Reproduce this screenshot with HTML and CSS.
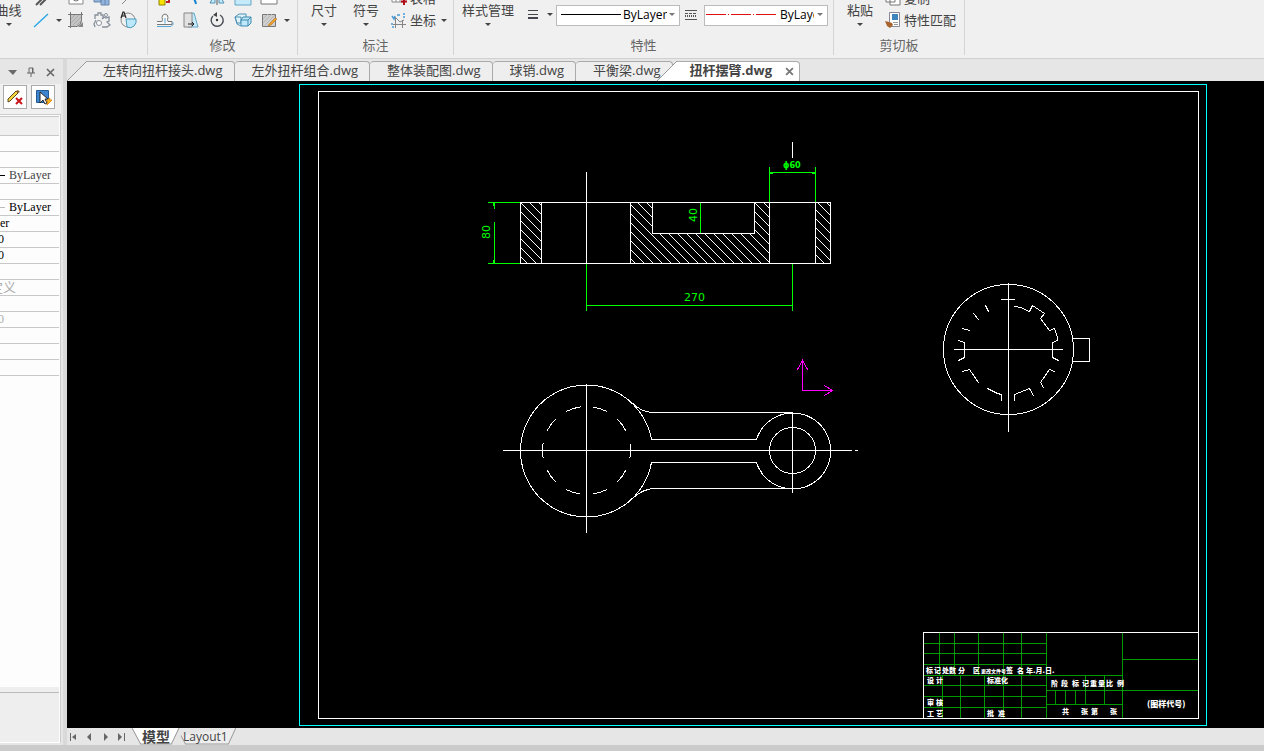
FILE: index.html
```html
<!DOCTYPE html>
<html lang="zh-CN">
<head>
<meta charset="utf-8">
<title>扭杆摆臂.dwg</title>
<link rel="stylesheet" href="styles.css">
</head>
<body>
<header class="ribbon">
  <section class="group group-draw">
    <div class="tools">
      <button class="big">曲线<i class="caret"></i></button>
      <div class="rows">
        <div class="row">
          <button class="tool" aria-label="双线"><svg viewBox="0 0 18 18"><path d="M4 16L15 5M8 16L17 7" stroke="#555" stroke-width="2"/></svg></button>
          <i class="gap"></i>
          <button class="tool" aria-label="云线"><svg viewBox="0 0 18 18"><path d="M2 2h14v13H2z" fill="#fff" stroke="#888"/><circle cx="9" cy="9" r="3" fill="none" stroke="#777"/></svg></button>
          <button class="tool" aria-label="块"><svg viewBox="0 0 18 18"><path d="M1 5h7v8H1zM8 7h8v9H8z" fill="#8fb4dd" stroke="#6b86ab"/><path d="M12 7v9" stroke="#6b86ab"/></svg></button>
          <button class="tool" aria-label="点"><svg viewBox="0 0 18 18"><path d="M3 15L12 6" stroke="#888"/></svg></button>
        </div>
        <div class="row">
          <button class="tool" aria-label="直线"><svg viewBox="0 0 18 18"><path d="M2 16L16 3" stroke="#22a5e8" stroke-width="1.3"/></svg></button>
          <i class="gap"><i class="caret"></i></i>
          <button class="tool" aria-label="填充"><svg viewBox="0 0 18 18"><path d="M4 4h11v7l-4 4H4z" fill="#c4c4c4"/><path d="M4 8l4-4M4 12l8-8M6 14l9-9M10 14l5-5" stroke="#aaa"/><path d="M1 3.500h15M3.500 1v16M1 15.500h9q4-1 4.500-6V1" fill="none" stroke="#777"/><path d="M11 16h5v-5" fill="#888"/></svg></button>
          <button class="tool" aria-label="齿轮"><svg viewBox="0 0 18 18"><path d="M2 8V4h3V2h3v2h2v4M9 8l2-2 2 1 3-1v4l-2 1 3 3-3 2H9M2 16l-1-3 2-4" fill="none" stroke="#87909c" stroke-width="1.3"/><circle cx="6" cy="12" r="2.5" fill="#fff" stroke="#87909c"/><circle cx="13" cy="4" r="1.5" fill="#fff" stroke="#87909c"/></svg></button>
          <button class="tool" aria-label="局部放大"><svg viewBox="0 0 18 18"><circle cx="9" cy="9" r="7" fill="none" stroke="#888"/><path d="M7 8h10q1 4-2 7-3 3-7 1z" fill="#bce8fb" stroke="#4d9abb"/><path d="M2 7l2-6h1l2 6M3 5h3" fill="none" stroke="#222" stroke-width="1.2"/></svg></button>
        </div>
      </div>
    </div>
  </section>
  <section class="group group-edit">
    <div class="tools">
      <div class="rows">
        <div class="row">
          <button class="tool" aria-label="删除"><svg viewBox="0 0 18 18"><path d="M3 8h6v8H3z" fill="#fae200" stroke="#8d8400"/><path d="M10 13h3V8" fill="none" stroke="#b22" stroke-width="2"/></svg></button>
          <button class="tool" aria-label="修剪"><svg viewBox="0 0 18 18"><path d="M9 6q4 4 5 9" stroke="#1684cf" stroke-width="2"/></svg></button>
          <button class="tool" aria-label="镜像"><svg viewBox="0 0 18 18"><path d="M2 14l5-9v9zM16 14l-5-9v9z" fill="#c5ebfb" stroke="#4f91b7"/><path d="M9 3v13" stroke="#555"/></svg></button>
          <button class="tool" aria-label="拉伸"><svg viewBox="0 0 18 18"><path d="M1 2h16v14H1z" fill="#c5ebfb" stroke="#65a5c5"/></svg></button>
          <button class="tool" aria-label="阵列"><svg viewBox="0 0 18 18"><path d="M1 2h16v13H1z" fill="#fff" stroke="#777"/></svg></button>
        </div>
        <div class="row">
          <button class="tool" aria-label="偏移"><svg viewBox="0 0 18 18"><path d="M1 10.500h5q1-2 0-4 0-3 3-3.500 3 .5 3 3.500-1 2 0 4h4v3H1" fill="#f8f8f8" stroke="#777"/><path d="M1 15.500h14l2-2v-2M9 12.500V7" fill="none" stroke="#55a5d5"/></svg></button>
          <button class="tool" aria-label="倾斜"><svg viewBox="0 0 18 18"><path d="M9 2h3l4 14H6z" fill="#c5ebfb" stroke="#65a5c5"/><path d="M2 2h8v14H2z" fill="#e1e1e1" stroke="#888"/><path d="M6 13h6l-2-2m2 2l-2 2" fill="none" stroke="#222"/></svg></button>
          <button class="tool" aria-label="旋转"><svg viewBox="0 0 18 18"><path d="M12 4a6 6 0 1 1-7 1" fill="none" stroke="#4b4f57" stroke-width="1.4"/><path d="M9 1v5L5 4z" fill="#444"/><circle cx="9" cy="9" r="1.2" fill="#333"/></svg></button>
          <button class="tool" aria-label="缩放"><svg viewBox="0 0 18 18"><path d="M1 6l4-3h7v3M1 6h6v6H3zM1 6l2 7 4 2" fill="#def3fc" stroke="#4c91b3"/><path d="M7 9l2-3h8v6l-3 3H7zM7 9h7v6M14 9l3-3" fill="#bfe8fb" stroke="#3e89b0"/></svg></button>
          <button class="tool" aria-label="编辑填充"><svg viewBox="0 0 18 18"><path d="M2.500 3.500h13v12h-13z" fill="#d0d0d0" stroke="#777"/><path d="M3 8l5-5M3 12l9-9M5 14L15 4M9 14l6-6" stroke="#b4b4b4"/><path d="M9 13l6-6 2 1-6 6-3 1z" fill="#f2a12c" stroke="#b0762a" stroke-width=".6"/></svg></button>
          <i class="gap"><i class="caret"></i></i>
        </div>
      </div>
    </div>
    <h2>修改</h2>
  </section>
  <section class="group group-note">
    <div class="tools">
      <button class="big">尺寸<i class="caret"></i></button>
      <button class="big">符号<i class="caret"></i></button>
      <div class="rows">
        <button class="row text-tool"><svg viewBox="0 0 18 18"><path d="M2 3h12v10H2zM2 6h12M2 10h12M6 3v10M10 3v10" fill="#fff" stroke="#888"/><path d="M14 9v7M11 12.500h6" stroke="#b10d16" stroke-width="2"/></svg>表格</button>
        <button class="row text-tool"><svg viewBox="0 0 18 18"><path d="M5.500 6v11M3 13.500h13M12.500 9v8M6 7l4 4 4-2" fill="none" stroke="#858585"/><path d="M2 5l2 3 1-3M7 4h3M13 3h2M13 6h2M2 12v2M2 16h2" fill="none" stroke="#4b9bd8" stroke-width="1.5"/></svg>坐标<i class="caret"></i></button>
      </div>
    </div>
    <h2>标注</h2>
  </section>
  <section class="group group-props">
    <div class="tools">
      <button class="big">样式管理<i class="caret"></i></button>
      <button class="width-tool" aria-label="线宽"><svg viewBox="0 0 12 12"><path d="M1 2.500h10M1 6.500h10" stroke="#454550"/><path d="M1 10h10" stroke="#454550" stroke-width="2"/></svg><i class="caret"></i></button>
      <label class="picker"><select aria-label="线宽"><option>ByLayer</option></select><svg class="sample" viewBox="0 0 60 1"><path d="M0 .5h60" stroke="#000"/></svg><i class="caret"></i></label>
      <svg class="types" viewBox="0 0 12 12"><path d="M0 1.500h12M0 10.500h12" stroke="#555"/><path d="M0 4.500h12" stroke="#555" stroke-dasharray="3 1"/><path d="M0 7h12" stroke="#555" stroke-width="2" stroke-dasharray="1 1"/></svg>
      <label class="picker picker-type"><select aria-label="线型"><option>ByLayer</option></select><svg class="sample" viewBox="0 0 70 1"><path d="M0 .5h70" stroke="#e01010" stroke-dasharray="20 2 1 2"/></svg><i class="caret"></i></label>
    </div>
    <h2>特性</h2>
  </section>
  <section class="group group-clip">
    <div class="tools">
      <button class="big">粘贴<i class="caret"></i></button>
      <div class="rows">
        <button class="row text-tool"><svg viewBox="0 0 18 18"><path d="M2 2h9v11H2zM6 5h10v11H6z" fill="#fff" stroke="#777"/></svg>复制</button>
        <button class="row text-tool"><svg viewBox="0 0 18 18"><path d="M5.500 1.500h10v14h-10z" fill="#fff" stroke="#889"/><path d="M8 3h6v6H8z" fill="#3e84bd"/><path d="M9 11.500h5M10 13.500h4" stroke="#999"/><path d="M1 10l4 1 3 1 1 2-3 3-3-2z" fill="#a8632c"/></svg>特性匹配</button>
      </div>
    </div>
    <h2>剪切板</h2>
  </section>
</header>

<main class="main">
  <aside class="panel">
    <div class="panel-head">
      <button aria-label="菜单"><svg viewBox="0 0 10 10"><path d="M1 3h9L6 8z" fill="#6a6a6a"/></svg></button>
      <button aria-label="固定"><svg viewBox="0 0 10 10"><path d="M3 1h4v5M3 1v5M1 6h8M5 6v4" fill="none" stroke="#666"/><path d="M6 1h1v5H6z" fill="#666"/></svg></button>
      <button aria-label="关闭"><svg viewBox="0 0 10 10"><path d="M2 2l7 7M9 2L2 9" stroke="#666" stroke-width="1.6"/></svg></button>
    </div>
    <div class="panel-tools">
      <button aria-label="取消选择"><svg viewBox="0 0 20 20"><path d="M3 12L11 4l2 2-8 8-2 1z" fill="#f5d33c" stroke="#5b4a22"/><path d="M11 4l2-1 2 2-2 1z" fill="#8d5a2b"/><path d="M11 11l6 6M17 11l-6 6" stroke="#c8141c" stroke-width="2"/></svg></button>
      <button aria-label="快速选择"><svg viewBox="0 0 20 20"><path d="M3.500 3.500h12v12h-12z" fill="#3b86cf" stroke="#245a94"/><path d="M7 5v11l3-3 2 4 2-1-2-4h3z" fill="#fff" stroke="#222"/><path d="M17 11l-4 3h2l-1 4 5-5h-3z" fill="#ffc21f" stroke="#e08a10"/></svg></button>
    </div>
    <div class="props">
      <div class="prop prop-title"></div>
      <div class="prop"></div>
      <div class="prop"></div>
      <div class="prop dim"><i class="dash"></i>ByLayer</div>
      <div class="prop"></div>
      <div class="prop"><i class="dash light"></i>ByLayer</div>
      <div class="prop">er</div>
      <div class="prop num">0</div>
      <div class="prop num">0</div>
      <div class="prop"></div>
      <div class="prop off cut">定义</div>
      <div class="prop"></div>
      <div class="prop off num">0</div>
      <div class="prop"></div>
      <div class="prop"></div>
      <div class="prop"></div>
      <div class="props-foot"></div>
    </div>
  </aside>

  <section class="work">
    <nav class="tabs">
      <button class="tab tab-slant"><svg class="slant" viewBox="0 0 20 20"><path d="M0 20L20 0V20z" fill="#eee"/><path d="M0 20L20 0" stroke="#999"/></svg><span>左转向扭杆接头.dwg</span></button>
      <button class="tab"><span>左外扭杆组合.dwg</span></button>
      <button class="tab"><span>整体装配图.dwg</span></button>
      <button class="tab"><span>球销.dwg</span></button>
      <button class="tab tab-last"><span>平衡梁.dwg</span></button>
      <button class="tab tab-slant tab-active"><svg class="slant" viewBox="0 0 20 20"><path d="M0 20L20 0V20z" fill="#fff"/><path d="M0 20L20 0" stroke="#999"/></svg><span>扭杆摆臂.dwg<svg class="close" viewBox="0 0 8 8"><path d="M1 1l6 6M7 1L1 7" stroke="#777" stroke-width="1.6"/></svg></span></button>
    </nav>

    <svg class="canvas" viewBox="67 81 1197 647" role="img" aria-label="扭杆摆臂图纸">
      <defs>
        <clipPath id="cut-faces"><path d="M520 202h21v61h-21zM815 202h15v61h-15zM630 202h22v31h102v-31h15v61H630z"/></clipPath>
      </defs>
      <g transform="translate(.5 .5)" fill="none" stroke="#fff" stroke-linecap="square" shape-rendering="crispEdges">
        <path stroke="#0ff" d="M299 84H1206V725H299z"/>
        <path d="M318 91H1198V718H318z"/>

        <path clip-path="url(#cut-faces)" d="M466 202l61 61m-52-61l61 61m-52-61l61 61m-52-61l61 61m-52-61l61 61m-52-61l61 61m-52-61l61 61m-52-61l61 61m-52-61l61 61m-52-61l61 61m-52-61l61 61m-52-61l61 61m-52-61l61 61m-52-61l61 61m-52-61l61 61m-52-61l61 61m-52-61l61 61m-52-61l61 61m-52-61l61 61m-52-61l61 61m-52-61l61 61m-52-61l61 61m-52-61l61 61m-52-61l61 61m-52-61l61 61m-52-61l61 61m-52-61l61 61m-52-61l61 61m-52-61l61 61m-52-61l61 61m-52-61l61 61m-52-61l61 61m-52-61l61 61m-52-61l61 61m-52-61l61 61m-52-61l61 61m-52-61l61 61m-52-61l61 61m-52-61l61 61m-52-61l61 61m-52-61l61 61"/>
        <path d="M520 202H830V263H520zM541 202V263M630 202V263M652 202V233H754V202M769 202V263M815 202V263M586 172V263M792 142V157"/>
        <path stroke="#0f0" d="M488 202H519M488 263H519M494 202V208M494 222V263M493 203v2M493 260v2M700 203V232M586 264V310M792 264V310M586 305H792M769 167V201M815 167V201M769 172H815M770 173h2M812 173h2"/>

        <path d="M651 439A66 66 0 1 0 651 462M652 439H756M652 462H756M756 439A38 38 0 1 1 756 462M630 401Q641 412 652 412H792M633 497Q643 488 655 488H792"/>
        <circle cx="792" cy="450" r="23"/>
        <circle cx="586" cy="450" r="44" stroke-dasharray="14 13.65" stroke-dashoffset="7"/>
        <path d="M503 450H851M855 450H857M586 384V532M792 412V492"/>
        <path stroke="#f0f" d="M802 361V390H832M797 369L802 360L807 369M824 385L832 390L824 395"/>

        <circle cx="1008" cy="349" r="65"/>
        <path d="M1008 283V431M954 349H1062M1001 299H1014M1073 338H1089V361H1073"/>
        <path d="M1014 306L1020 307L1029 311L1032 305L1044 313L1040 318L1049 330L1054 328L1057 337V340L1052 342V357L1058 360M985 305L988 311M973 313L978 319M962 328L969 330M958 340L964 342V357L958 360M962 371L969 369L978 382M987 388L997 393L1001 394V400M1014 400V394L1029 388L1033 395M1043 387L1040 382L1049 369L1054 371"/>

        <path stroke="#090" d="M923 643H1046M923 653H1046M923 664H1046M923 675H1122M923 685H1046M923 696H1046M923 707H1046M939 632V675M954 632V675M978 632V675M942 675V718M960 675V718M984 675V718M1003 632V718M1021 632V718M1046 632V718M1122 632V718M1046 690H1198M1046 704H1122M1122 659H1198M1055 690V704M1065 690V704M1075 690V704M1085 675V704M1104 675V704"/>
        <path d="M1198 718H923V632H1198V718"/>
      </g>
      <g class="dims">
        <text x="684" y="301">270</text>
        <text transform="translate(490 239) rotate(-90)">80</text>
        <text transform="translate(697 222) rotate(-90)">40</text>
        <text class="narrow" x="783" y="168">ϕ60</text>
      </g>
      <g class="block-text">
        <text x="926" y="673">标</text><text x="934" y="673">记</text><text x="942" y="673">处</text><text x="949" y="673">数</text><text x="958" y="673">分</text><text x="973" y="673">区</text>
        <text class="tight" x="981" y="673">更改文件号</text><text x="1006" y="673">签</text><text x="1017" y="673">名</text><text x="1026" y="673">年.月.日.</text>
        <text x="927" y="683">设</text><text x="936" y="683">计</text><text x="987" y="683">标准化</text>
        <text x="927" y="705">审</text><text x="936" y="705">核</text>
        <text x="927" y="716">工</text><text x="936" y="716">艺</text><text x="987" y="716">批</text><text x="998" y="716">准</text>
        <text x="1051" y="686">阶</text><text x="1061" y="686">段</text><text x="1072" y="686">标</text><text x="1082" y="686">记</text><text x="1090" y="686">重</text><text x="1098" y="686">量</text><text x="1106" y="686">比</text><text x="1117" y="686">例</text>
        <text x="1062" y="714">共</text><text x="1081" y="714">张</text><text x="1091" y="714">第</text><text x="1110" y="714">张</text>
        <text class="code" x="1147" y="707">(图样代号)</text>
      </g>
    </svg>

    <nav class="sheets">
      <button class="step" aria-label="首页"><svg viewBox="0 0 10 8"><path d="M2.500 0v8" stroke="#666"/><path d="M8 1v6L4 4z" fill="#666"/></svg></button>
      <button class="step" aria-label="上一页"><svg viewBox="0 0 10 8"><path d="M7 0v8L3 4z" fill="#666"/></svg></button>
      <button class="step" aria-label="下一页"><svg viewBox="0 0 10 8"><path d="M4 0v8l4-4z" fill="#666"/></svg></button>
      <button class="step" aria-label="末页"><svg viewBox="0 0 10 8"><path d="M8.500 0v8" stroke="#666"/><path d="M2 0v8l4-4z" fill="#666"/></svg></button>
      <button class="sheet sheet-on"><svg viewBox="0 0 50 16" preserveAspectRatio="none"><path d="M0 0L9 15H41L49 0" fill="#fff" stroke="#999"/></svg><span>模型</span></button>
      <button class="sheet"><svg viewBox="0 0 62 16" preserveAspectRatio="none"><path d="M1 7L6 15H53L61 0" fill="#eee" stroke="#999"/></svg><span>Layout1</span></button>
    </nav>
  </section>
</main>
<footer class="status"></footer>
</body>
</html>
```
FILE: styles.css
```css
* { box-sizing: border-box; }
body {
  margin: 0;
  min-height: 100vh;
  display: flex;
  flex-direction: column;
  overflow: hidden;
  background: #e6e6e6;
  color: #444;
  font: 13px/20px "Open Sans", "Noto Sans CJK SC", sans-serif;
}
button {
  margin: 0;
  padding: 0;
  border: 0;
  background: none;
  color: inherit;
  font: inherit;
}
svg { display: block; fill: none; }

.caret {
  display: block;
  border: 3px solid transparent;
  border-top-color: #444;
  border-bottom: 0;
}

/* ribbon */
.ribbon {
  display: flex;
  height: 59px;
  overflow: hidden;
  background: #f0f0f0;
  border-bottom: 1px solid #d0d0d0;
}
.group {
  display: flex;
  flex-direction: column;
  justify-content: flex-end;
  border-right: 1px solid #d4d4d4;
  margin-bottom: 3px;
  flex: none;
}
.group h2 {
  flex: none;
  margin: 4px 0 0;
  height: 20px;
  font-size: 13px;
  font-weight: 400;
  color: #666;
  text-align: center;
}
.tools { display: flex; flex: none; align-items: flex-end; }
.big {
  height: 31px;
  display: flex;
  flex-direction: column;
  align-items: center;
  white-space: nowrap;
}
.big .caret { margin-top: 3px; }
.rows { display: flex; flex-direction: column; }
.row { display: flex; align-items: center; height: 22px; line-height: 18px; }
.tool { width: 26px; display: flex; justify-content: center; }
.tool svg, .text-tool svg { width: 18px; height: 18px; }
.gap { width: 9px; display: flex; justify-content: center; }
.text-tool { gap: 2px; white-space: nowrap; }
.text-tool .caret { margin-left: 3px; }

.group-draw { width: 148px; padding-bottom: 24px; }
.group-draw .big { margin-left: -5px; width: 27px; }
.group-draw .rows { margin-left: 6px; }
.group-edit { width: 150px; }
.group-edit .tools { padding-left: 4px; }
.group-note { width: 156px; }
.group-note .tools { padding-left: 13px; }
.group-note .big { margin-right: 16px; }
.group-note .rows { margin-left: -5px; }
.group-props { width: 380px; }
.group-props .tools { padding-left: 8px; }
.group-clip { width: 131px; }
.group-clip .tools { padding-left: 13px; }
.group-clip .rows { margin-left: 11px; }

.width-tool {
  display: flex;
  align-items: center;
  gap: 8px;
  height: 20px;
  margin: 0 3px 7px 13px;
}
.width-tool svg, .types { width: 12px; height: 12px; }
.types { margin: 0 7px 10px 5px; }
.picker { position: relative; width: 124px; height: 21px; margin-bottom: 6px; }
.picker select {
  appearance: none;
  width: 100%;
  height: 100%;
  padding: 0 12px 0 66px;
  border: 1px solid #bbb;
  border-radius: 0;
  background: #fff;
  color: #000;
  font: 12px/18px "Open Sans", sans-serif;
}
.picker-type select { padding: 0 13px 0 75px; }
.picker .sample { position: absolute; left: 5px; top: 10px; width: 60px; height: 1px; }
.picker-type .sample { left: 2px; width: 70px; }
.picker .caret { position: absolute; right: 5px; top: 9px; border-top-color: #777; }

/* property panel */
.main { flex: 1; display: flex; }
.panel {
  width: 67px;
  display: flex;
  flex-direction: column;
  border-right: 4px solid #d9d9d9;
  padding: 0 2px 2px 0;
}
.panel-head { height: 25px; display: flex; align-items: center; padding-left: 7px; gap: 9px; }
.panel-head svg { width: 10px; height: 10px; }
.panel-tools {
  height: 30px;
  display: flex;
  gap: 4px;
  padding: 1px 0 0 3px;
  background: #f0f0f0;
}
.panel-tools button {
  width: 24px;
  height: 24px;
  border: 1px solid #aaa;
  background: #fff;
  display: grid;
  place-items: center;
}
.panel-tools svg { width: 20px; height: 20px; }
.props {
  flex: 1;
  display: flex;
  flex-direction: column;
  border: 1px solid #ccc;
  border-width: 1px 1px 0 0;
  padding: 1px 1px 0 0;
  background: #fdfdfd;
  color: #000;
  font: 12px/15px "Liberation Serif", "Noto Sans CJK SC", serif;
}
.prop {
  display: flex;
  align-items: center;
  gap: 4px;
  height: 16px;
  border-bottom: 1px solid #c8c8c8;
  overflow: hidden;
}
.prop-title { height: 20px; background: #f0f0f0; border-top: 1px solid #c8c8c8; }
.dash { width: 5px; height: 1px; background: #000; }
.light { background: #bbb; }
.dim { color: #444; }
.off { color: #aaa; }
.num { text-indent: -2px; }
.cut { font-size: 13px; margin-left: -10px; }
.props-foot {
  margin-top: auto;
  height: 56px;
  background: #eee;
  border-bottom: 1px solid #fff;
}
.props-foot::before {
  content: "";
  display: block;
  height: 5px;
  border-bottom: 1px solid #bbb;
}

/* drawing area */
.work { flex: 1; min-width: 0; display: flex; flex-direction: column; }
.tabs { display: flex; align-items: flex-end; height: 22px; padding-top: 2px; }
.tab { height: 20px; display: flex; white-space: nowrap; }
.tab span {
  height: 20px;
  padding: 0 11px 0 17px;
  border: 1px solid #aaa;
  border-width: 1px 1px 0 0;
  border-radius: 4px 4px 0 0;
  background: #eee;
  line-height: 16px;
}
.slant { width: 20px; height: 20px; }
.tab-slant span { padding-left: 16px; border-radius: 0 4px 0 0; }
.tab-active { margin-left: -16px; font-weight: 700; }
.tab-active span {
  display: flex;
  gap: 13px;
  padding: 0 5px 0 13px;
  background: #fff;
}
.close { width: 9px; height: 9px; margin-top: 5px; }
.canvas { flex: 1; width: 100%; min-height: 0; background: #000; }

.dims { fill: #0f0; font: 11px "DejaVu Sans", sans-serif; }
.narrow { font: 700 9px "Liberation Sans Narrow", "DejaVu Sans Condensed", sans-serif; }
.block-text { fill: #fff; font: 900 7px "Noto Sans CJK SC", sans-serif; }
.tight { font-size: 5px; }
.code { font-size: 8px; }

.sheets { height: 17px; display: flex; padding-left: 1px; }
.step { width: 16px; display: grid; align-items: center; justify-items: start; }
.step svg { width: 10px; height: 8px; }
.sheet { position: relative; height: 17px; padding: 0 9px 0 3px; line-height: 15px; font-size: 12px; }
.sheet svg { position: absolute; inset: 0; width: 100%; height: 100%; }
.sheet span { position: relative; }
.sheet-on { z-index: 1; padding: 0 10px; font-size: 14px; font-weight: 700; }
.status { height: 6px; background: #cbcbcb; }
```
